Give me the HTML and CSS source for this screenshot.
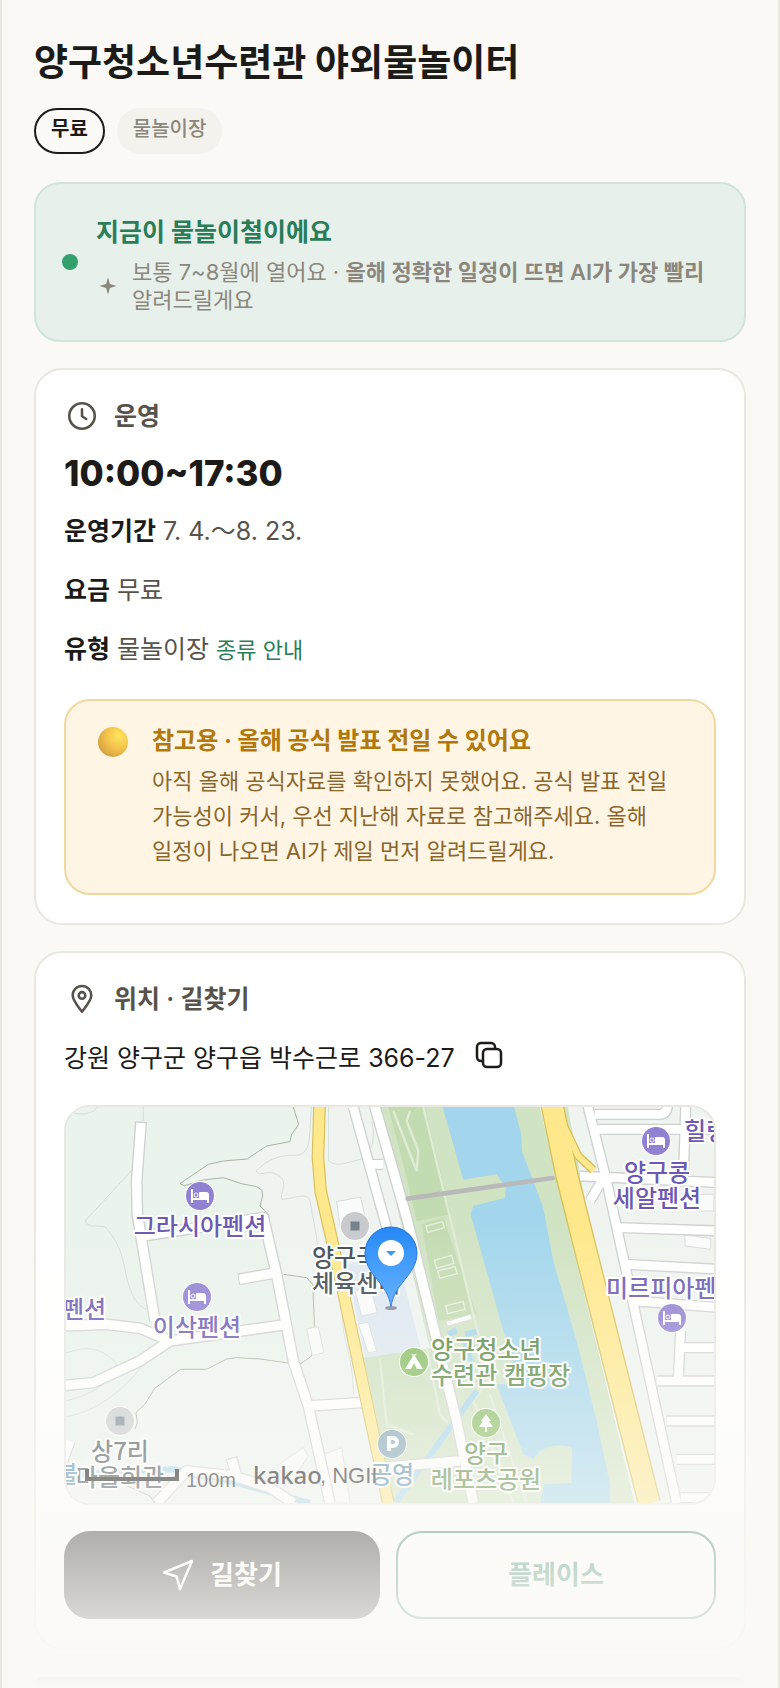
FILE: index.html
```html
<!DOCTYPE html>
<html lang="ko">

<head>
  <meta charset="utf-8" />
  <meta name="viewport" content="width=device-width, initial-scale=1" />
  <title>양구청소년수련관 야외물놀이터</title>
  <link rel="stylesheet" href="styles.css">
</head>

<body>
  <main class="screen">
    <h1 class="title">양구청소년수련관 야외물놀이터</h1>
    <div class="tags">
      <span class="tag tag-free">무료</span>
      <span class="tag">물놀이장</span>
    </div>

    <section class="season">
      <span class="season-dot"></span>
      <div class="season-body">
        <h2 class="season-title">지금이 물놀이철이에요</h2>
        <div class="season-note">
          <svg class="spark" viewBox="0 0 24 24" fill="currentColor" aria-hidden="true">
            <path d="M12 3.500L13.900 10.100 20.500 12 13.900 13.900 12 20.500 10.100 13.900 3.500 12 10.100 10.100Z" />
          </svg>
          <p class="season-text">보통 7~8월에 열어요 · <b>올해 정확한 일정이 뜨면 AI가 가장 빨리</b> 알려드릴게요</p>
        </div>
      </div>
    </section>

    <section class="card">
      <h2 class="card-head">
        <svg class="head-icon" viewBox="0 0 24 24" aria-hidden="true">
          <circle cx="12" cy="12" r="8.500" />
          <path d="M12 7.500v4.700l2.800 1.800" />
        </svg>
        운영
      </h2>
      <p class="hours">10:00~17:30</p>
      <p class="row"><b>운영기간</b> 7. 4.〜8. 23.</p>
      <p class="row"><b>요금</b> 무료</p>
      <p class="row"><b>유형</b> 물놀이장 <a class="guide" href="#types">종류 안내</a></p>
      <div class="notice">
        <span class="notice-dot"></span>
        <div>
          <h3 class="notice-title">참고용 · 올해 공식 발표 전일 수 있어요</h3>
          <p class="notice-text">아직 올해 공식자료를 확인하지 못했어요. 공식 발표 전일 가능성이 커서, 우선 지난해 자료로 참고해주세요. 올해 일정이 나오면 AI가 제일 먼저 알려드릴게요.</p>
        </div>
      </div>
    </section>

    <section class="card">
      <h2 class="card-head">
        <svg class="head-icon" viewBox="0 0 24 24" aria-hidden="true">
          <path d="M12 20.500C9 16.500 5.800 13 5.800 9.500a6.200 6.200 0 0 1 12.400 0C18.200 13 15 16.500 12 20.500Z" />
          <circle cx="12" cy="9.600" r="2.200" />
        </svg>
        위치 · 길찾기
      </h2>
      <div class="address">
        <span>강원 양구군 양구읍 박수근로 366-27</span>
        <button class="copy" type="button" aria-label="주소 복사">
          <svg class="copy-icon" viewBox="0 0 28 28" aria-hidden="true">
            <rect x="8" y="8" width="18" height="18" rx="4" />
            <path d="M8 20H6a4 4 0 0 1-4-4V6a4 4 0 0 1 4-4h10a4 4 0 0 1 4 4v2" />
          </svg>
        </button>
      </div>

      <div class="map">
        <svg class="map-canvas" viewBox="0 0 648 396" preserveAspectRatio="xMidYMid slice" role="img" aria-label="지도">
          <defs>
            <g id="bed">
              <circle r="15" fill="#fff" />
              <circle r="14" fill="#9081d3" />
              <path d="M-9-7h2V2H-1V-4H6q3 0 3 3V7H7V4H-7V7H-9Z" fill="#fff" />
              <circle cx="-4" cy="-1" r="2" fill="none" stroke="#fff" />
            </g>
            <g id="spot">
              <circle r="15" fill="#fff" />
              <circle r="14" fill="#c8cacd" />
              <path d="M-4.500-4.500h9v9h-9z" fill="#75828b" />
            </g>
            <linearGradient id="pin" x1="0" y1="0" x2="0" y2="1">
              <stop offset="0" stop-color="#2387f8" />
              <stop offset="1" stop-color="#45a2ff" />
            </linearGradient>
          </defs>
          <rect width="648" height="396" fill="#eff4f1" />

          <!-- terrain, roads and water are drawn on a 3x grid -->
          <g transform="translate(-6 -6) scale(.3333)">
            <path d="M0 0H700L716 70 695 124 620 135 560 174 445 190 360 250 490 230 600 262 600 315 635 370 670 520 755 550 763 750 720 790 530 770 440 805 362 805 284 862 228 935 232 980 0 1120Z" fill="#eaf3ec" />
            <g class="contour">
              <path d="M40 36C80 45 110 35 120 0M250 0V60M215 208C150 280 130 300 75 360C90 385 110 370 135 378C165 410 180 440 192 490C205 560 220 610 260 625M18 756C80 735 125 735 175 795M18 900C100 880 150 845 178 795M18 948C110 930 190 870 250 790M756 0C745 100 760 155 710 163C640 160 610 190 588 210C600 230 620 205 650 220C690 240 660 270 665 295C700 295 740 270 750 300C760 360 770 400 775 450M806 18V180C830 200 860 185 900 175C930 165 950 120 935 60M850 640C840 700 880 760 880 880" />
              <path class="trail" d="M700 18L716 70 695 100 690 122 620 135 562 174 490 180 445 190 360 248 373 254 430 237 490 230 545 248 590 257 606 268 608 285 600 315 626 340 628 362M670 520L740 530 758 550 763 660 763 700 755 765 720 790M690 787L600 774 530 770 500 774 440 805 362 805 284 862 256 908 228 935 232 965 225 985M190 1150L270 1185 285 1206" />
            </g>

            <path d="M860 490L1010 460 1110 850 915 770Z" fill="#dde8f1" />
            <path d="M912 770L1120 740 1250 1240H1010Z" fill="#cde1c0" />
            <path d="M955 0H1520L1750 1240H1235L1100 700 1010 310Z" fill="#d0e3c3" />
            <path d="M985 18H1095L1172 340 1070 360 1035 210Z" fill="#c3dbb1" />
            <path d="M1085 370L1150 350 1250 640 1135 660Z" fill="#c3dbb1" />
            <path d="M960 775L980 970 1060 1000M1100 740L1140 940 1200 1010M1000 30L1070 210 1075 150 1040 60 1050 30M1090 18L1240 640 1290 830 1240 900 1360 1206M1290 880L1400 1206" fill="none" stroke="#deebd5" stroke-width="7" />
            <path d="M1148 18H1362L1384 100 1386 150 1450 320 1480 480 1550 720 1610 960 1650 1150V1240H1435L1452 1150 1535 1145 1536 1038C1480 1025 1440 1040 1420 1075L1390 1060 1310 850 1380 850 1330 690 1232 340 1240 315 1335 290 1338 260 1310 220 1210 236Z" fill="#a3d6ec" />
            <path d="M1165 700L1190 688M1215 700L1250 692M1215 720L1235 790M1010 1200L1250 870M340 1105L470 1130 750 1206M60 1120L340 1105" fill="none" stroke="#a3d6ec" stroke-width="18" />
            <path d="M1435 0L1732 1240H1790L1490 0Z" fill="#eff5f2" />

            <g class="block">
              <path d="M830 302L902 288 918 360 840 375ZM885 570L930 555 952 635 905 645ZM895 670L925 664 950 750 925 756ZM740 684L775 677 792 755 757 764ZM650 1095L730 1040 745 1065 690 1150ZM790 1060L845 1040 870 1206H800ZM1875 402L1952 412V445L1875 435ZM1915 280H1962V330H1915ZM1158 662L1232 640 1236 655 1162 676Z" />
            </g>
            <g class="pitch">
              <path d="M1098 375L1148 362 1153 380 1103 394ZM1123 478L1175 463 1182 487 1130 502ZM1133 510L1185 497 1192 518 1140 532ZM1158 614L1210 602 1215 625 1162 638Z" />
            </g>

            <g class="road-edge">
              <path d="M243 62L230 240 232 340 285 660M0 675L140 670 240 682 330 720 670 672M0 855L100 845 240 780 330 720M250 405L610 350 650 520 700 780 745 915 905 905M535 535L650 515M745 915L810 1206M940 0L1040 350 1190 960 1240 1206M960 1100L1200 1080M290 1206L380 1110 520 1125 630 1160 700 1206M515 1070L530 1125M0 1100L30 1020" />
              <path d="M1580 0L1640 240 1850 1206M1600 85H1980M1877 18L1870 240M1560 225L1980 245M1590 300L1625 240M1680 380L1980 390M1700 490L1980 505M1725 600L1980 620M1862 690L1855 835M1862 740H1980M1790 840H1980M1820 960H1980M1850 1075H1980M1862 1190H1980M1605 40H1800Q1824 40 1824 0M880 18L980 380M925 190H970" class="narrow" />
            </g>
            <g class="road">
              <path d="M243 66L230 240 232 340 285 660M0 675L140 670 240 682 330 720 670 672M0 855L100 845 240 780 330 720M250 405L610 350 650 520 700 780 745 915 905 905M538 535L650 515M745 915L810 1206M940 0L1040 350 1190 960 1240 1206M960 1100L1200 1080M290 1206L380 1110 520 1125 630 1160 700 1206M515 1074L530 1125M0 1100L30 1020" />
              <path d="M1580 0L1640 240 1850 1206M1600 85H1980M1877 18L1870 240M1560 225L1980 245M1590 300L1625 240M1680 380L1980 390M1700 490L1980 505M1725 600L1980 620M1862 690L1855 835M1862 740H1980M1790 840H1980M1820 960H1980M1850 1075H1980M1862 1190H1980M1605 40H1800Q1824 40 1824 0M880 18L980 380M925 190H970" class="narrow" />
            </g>

            <g class="highway-edge">
              <path d="M779 0L774 170 782 270 830 480 985 1206" stroke-width="38" />
              <path d="M1474 0L1520 220 1768 1206" stroke-width="70" />
              <path d="M1505 60L1555 165 1600 207" stroke-width="26" />
            </g>
            <g class="highway">
              <path d="M779 0L774 170 782 270 830 480 985 1206" stroke-width="31" />
              <path d="M1474 0L1520 220 1768 1206" stroke-width="62" />
              <path d="M1505 60L1555 165 1602 209" stroke-width="18" />
            </g>
            <path d="M1043 293L1478 231" stroke="#b9b9b9" stroke-width="14" stroke-linecap="round" />
          </g>

          <use href="#bed" x="134" y="89" />
          <use href="#bed" x="131" y="190" />
          <use href="#bed" x="590" y="34" />
          <use href="#bed" x="606" y="211" />
          <use href="#spot" x="289" y="119" />
          <use href="#spot" x="54" y="314" />

          <g transform="translate(348 255)">
            <circle r="15" fill="#fff" />
            <circle r="14" fill="#82bb5d" />
            <path d="M-9 7L-1-6-3-8H-1L0-7 1-8H3L1-6 9 7H3L0 1-3 7Z" fill="#fff" />
          </g>
          <g transform="translate(420 316)">
            <circle r="15" fill="#fff" />
            <circle r="14" fill="#82bb5d" />
            <path d="M0-9L5-2H3L7 4H1V9H-1V4H-7L-3-2H-5Z" fill="#fff" />
          </g>
          <g transform="translate(326 337)">
            <circle r="15" fill="#fff" />
            <circle r="14" fill="#7ba1b4" />
            <path d="M-3 7V-6H1a4 4 0 0 1 0 8H-3" fill="none" stroke="#fff" stroke-width="4" />
          </g>

          <g class="label label-stay">
            <text x="134" y="128">그라시아펜션</text>
            <text x="131" y="229">이삭펜션</text>
            <text x="18" y="211">펜션</text>
            <text x="591" y="74">양구콩</text>
            <text x="591" y="100">세알펜션</text>
            <text class="start" x="618" y="33">힐링</text>
            <text class="start" x="540" y="190">미르피아펜</text>
          </g>
          <g class="label label-place">
            <text class="start" x="246" y="159">양구국민</text>
            <text class="start" x="246" y="185">체육센터</text>
            <text x="54" y="353">상7리</text>
            <text x="54" y="379">마을회관</text>
          </g>
          <g class="label label-park">
            <text class="start" x="365" y="251">양구청소년</text>
            <text class="start" x="365" y="277">수련관 캠핑장</text>
            <text x="420" y="355">양구</text>
            <text x="420" y="381">레포츠공원</text>
          </g>
          <g class="label label-water">
            <text x="326" y="376">공영</text>
            <text x="1" y="376">불</text>
          </g>

          <ellipse cx="325" cy="201" rx="6" ry="2" fill="#445" opacity=".6" />
          <path d="M325 200C322 176 299 168 299 146A26 26 0 0 1 351 146C351 168 328 176 325 200Z" fill="url(#pin)" stroke="#1b6fd8" />
          <circle cx="325" cy="146" r="13" fill="#fff" />
          <path d="M320 144H330L325 149Z" fill="#2f90fb" />

          <path d="M21 362V372H111V362" fill="none" stroke="#000" stroke-width="4" />
          <text class="scale" x="120" y="380">100m</text>
          <text class="kakao" x="187" y="377">kakao</text>
          <text class="credit" x="254" y="376">, NGII</text>
        </svg>
      </div>

      <div class="actions">
        <button class="btn btn-route" type="button">
          <svg class="route-icon" viewBox="0 0 32 32" aria-hidden="true">
            <path d="M30 2L2 13.500 14.500 17.500 18 30Z" />
          </svg>
          길찾기
        </button>
        <button class="btn btn-place" type="button">플레이스</button>
      </div>
    </section>

    <section class="next"></section>
    <div class="fade"></div>
  </main>
</body>

</html>
```

FILE: styles.css
```css
* {
  box-sizing: border-box;
}

body {
  margin: 0;
  background: #faf9f5;
  color: #1c1b18;
  font-family: Inter, "Noto Sans CJK KR", sans-serif;
  font-size: 25px;
  word-break: keep-all;
}

h1,
h2,
h3,
p {
  margin: 0;
}

.screen {
  position: relative;
  display: flex;
  flex-direction: column;
  height: 100vh;
  overflow: hidden;
  padding: 37px 32px 0;
  border: solid #e9e7e0;
  border-width: 0 2px;
}

.title {
  font-size: 37px;
  line-height: 52px;
  font-weight: 700;
}

.tags {
  display: flex;
  gap: 12px;
  margin: 19px 0 28px;
}

.tag {
  height: 46px;
  padding: 0 16px;
  border-radius: 23px;
  background: #f3f2ed;
  color: #8c877c;
  font-size: 20px;
  line-height: 42px;
  font-weight: 500;
}

.tag-free {
  padding: 0 15px;
  border: 2px solid #1c1b18;
  background: none;
  color: #1c1b18;
  line-height: 38px;
  font-weight: 600;
}

.season {
  display: flex;
  flex-shrink: 0;
  align-items: center;
  gap: 18px;
  padding: 26px;
  border: 2px solid #cfe5d9;
  border-radius: 26px;
  background: #e7f0eb;
}

.season-dot {
  flex: none;
  width: 16px;
  height: 16px;
  border-radius: 50%;
  background: #34a16c;
}

.season-title {
  color: #2a7d58;
  font-size: 25px;
  line-height: 44px;
  font-weight: 700;
}

.season-note {
  display: flex;
  align-items: center;
  gap: 12px;
  margin-top: 4px;
  color: #8c877c;
}

.spark {
  flex: none;
  width: 24px;
  height: 24px;
}

.season-text {
  font-size: 22px;
  line-height: 28px;
}

.season-text b {
  font-weight: 600;
}

.card {
  flex-shrink: 0;
  margin-top: 26px;
  padding: 26px 28px 28px;
  border: 2px solid #e9e7e0;
  border-radius: 28px;
  background: #fff;
}

.card-head {
  display: flex;
  align-items: center;
  gap: 14px;
  color: #57534b;
  font-size: 25px;
  line-height: 40px;
  font-weight: 600;
}

.head-icon {
  width: 36px;
  height: 36px;
  fill: none;
  stroke: currentColor;
  stroke-width: 1.7;
  stroke-linecap: round;
  stroke-linejoin: round;
}

.hours {
  margin: 14px 0 16px;
  font-size: 35px;
  line-height: 46px;
  font-weight: 800;
}

.row {
  margin-bottom: 20px;
  color: #57534b;
  line-height: 39px;
}

.row b {
  color: #1c1b18;
  font-weight: 600;
}

.guide {
  color: #2a7d58;
  font-size: 22px;
  text-decoration: none;
}

.notice {
  display: flex;
  gap: 24px;
  margin-top: 29px;
  padding: 21px 32px 24px;
  border: 2px solid #efd9a0;
  border-radius: 26px;
  background: #fff5e4;
}

.notice-dot {
  flex: none;
  width: 30px;
  height: 30px;
  margin-top: 5px;
  border-radius: 50%;
  background: radial-gradient(circle at 70% 30%, #ffe65c, #f4c44c 40%, #d9a441 75%, #cf8258);
}

.notice-title {
  color: #b1780c;
  font-size: 24px;
  line-height: 38px;
  font-weight: 700;
}

.notice-text {
  margin-top: 4px;
  color: #8a662b;
  font-size: 22px;
  line-height: 35px;
}

.address {
  display: flex;
  align-items: center;
  gap: 20px;
  margin: 19px 0 27px;
  line-height: 40px;
}

.copy {
  display: flex;
  padding: 0 0 6px;
  border: 0;
  background: none;
  color: inherit;
}

.copy-icon {
  width: 28px;
  height: 28px;
  fill: none;
  stroke: currentColor;
  stroke-width: 2.5;
}

.map {
  height: 400px;
  overflow: hidden;
  border: 2px solid #e9e7e0;
  border-radius: 26px;
}

.map-canvas {
  display: block;
  width: 100%;
  height: 100%;
}

.contour {
  fill: none;
  stroke: #d5ddd5;
  stroke-width: 3;
}

.trail {
  stroke: #a9b5a0;
}

.block {
  fill: #fafbfb;
  stroke: #d9dcdc;
  stroke-width: 3;
}

.pitch {
  fill: none;
  stroke: #e6f0df;
  stroke-width: 4;
}

.road-edge,
.road,
.highway-edge,
.highway {
  fill: none;
  stroke-linejoin: round;
}

.road-edge {
  stroke: #cfd1d1;
  stroke-width: 36px;
}

.road {
  stroke: #fff;
  stroke-width: 28px;
}

.road-edge .narrow {
  stroke-width: 34px;
}

.road .narrow {
  stroke-width: 26px;
}

.highway-edge {
  stroke: #d5c05b;
}

.highway {
  stroke: #ffe88b;
}

.label {
  font-family: "Noto Sans CJK KR", sans-serif;
  font-size: 24px;
  font-weight: 500;
  text-anchor: middle;
  paint-order: stroke;
  stroke: #fff;
  stroke-width: 4px;
  stroke-linejoin: round;
}

.label .start {
  text-anchor: start;
}

.label-stay {
  fill: #6b59b3;
}

.label-place {
  fill: #3f4b52;
}

.label-park {
  fill: #52853a;
}

.label-water {
  fill: #4f8aa8;
}

.scale {
  fill: #111;
  font-family: "Liberation Sans", sans-serif;
  font-size: 20px;
}

.kakao {
  fill: #000;
  font-family: "Noto Sans", sans-serif;
  font-size: 24px;
  font-weight: 500;
}

.credit {
  fill: #111;
  font-family: "Liberation Sans", sans-serif;
  font-size: 22px;
}

.actions {
  display: flex;
  gap: 16px;
  margin-top: 26px;
}

.btn {
  display: flex;
  flex: 1 1 0;
  align-items: center;
  justify-content: center;
  gap: 16px;
  height: 88px;
  padding: 0 16px;
  border: 0;
  border-radius: 26px;
  font: inherit;
  font-size: 26px;
  line-height: 38px;
  font-weight: 700;
}

.btn-route {
  background: #1c1b18;
  color: #fff;
}

.btn-place {
  border: 2px solid #2a7d58;
  background: #fff;
  color: #2a7d58;
}

.route-icon {
  width: 32px;
  height: 32px;
  fill: none;
  stroke: currentColor;
  stroke-width: 2.5;
  stroke-linejoin: round;
}

.next {
  flex: 1 0 0;
  margin-top: 28px;
  border-radius: 28px 28px 0 0;
  background: #1c1b18;
}

/* page dissolves into the background toward the bottom edge */
.fade {
  position: absolute;
  right: 0;
  bottom: 0;
  left: 0;
  height: 466px;
  background: linear-gradient(rgba(250, 249, 245, 0), #faf9f5);
  pointer-events: none;
}
```
